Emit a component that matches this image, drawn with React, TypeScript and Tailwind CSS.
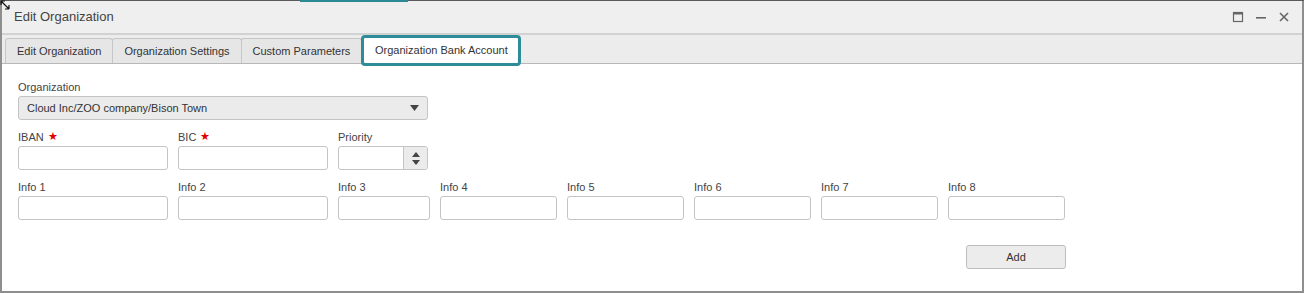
import React from "react";

const font = { fontFamily: '"Liberation Sans", Arial, sans-serif' };

function Field({ label, w, req }: { label: string; w: string; req?: boolean }) {
  return (
    <div className="flex flex-col">
      <div className="h-[16px] text-[11px] leading-[14px] text-[#444] flex items-start">
        {label}
        {req && <span className="text-[#e00000] ml-[4px] text-[11px] leading-[12px]">★</span>}
      </div>
      <div className={`${w} h-[24px] border border-[#c4c4c4] rounded-[3px] bg-white`} />
    </div>
  );
}

export default function App() {
  return (
    <div className="w-[1304px] h-[293px] bg-white overflow-hidden relative" style={font}>
      <div className="absolute left-0 top-0 w-full h-[1px] bg-[#5a5a5a]" />
      <div className="absolute left-[300px] top-0 w-[108px] h-[2px] bg-[#2b8a96]" />
      <svg className="absolute left-0 top-0" width="11" height="11" viewBox="0 0 11 11">
        <path d="M1 1 L9 9 M1 1 L1 5 M1 1 L5 1 M9 9 L9 5 M9 9 L5 9" stroke="#111" strokeWidth="1.2" fill="none" />
      </svg>
      <div className="w-full h-full border-l-[2px] border-r-[2px] border-b-[2px] border-[#8e8e8e] flex flex-col">
        <div className="h-[34px] mt-[1px] bg-[#efefef] flex items-center justify-between pl-[12px] pr-[12px] border-b-[2px] border-[#d2d2d2]">
          <div className="text-[13px] text-[#444]">Edit Organization</div>
          <div className="flex items-center gap-[11px] text-[#555]">
            <svg width="12" height="12" viewBox="0 0 12 12">
              <rect x="1.5" y="1.5" width="9" height="9" fill="none" stroke="#666" strokeWidth="1.2" />
              <rect x="1.5" y="1.5" width="9" height="2" fill="#666" />
            </svg>
            <svg width="12" height="12" viewBox="0 0 12 12">
              <rect x="1" y="6" width="10" height="1.6" fill="#666" />
            </svg>
            <svg width="12" height="12" viewBox="0 0 12 12">
              <path d="M2 2 L10 10 M10 2 L2 10" stroke="#666" strokeWidth="1.6" />
            </svg>
          </div>
        </div>
        <div className="h-[29px] bg-[#ececec] flex items-end pl-[3px] border-b border-[#b8b8b8]">
          {["Edit Organization", "Organization Settings", "Custom Parameters"].map((t) => (
            <div
              key={t}
              className="h-[25px] px-[11px] flex items-center text-[11px] text-[#333] bg-[#e6e6e6] border border-b-0 border-[#c6c6c6] rounded-t-[3px] -mr-[1px]"
            >
              {t}
            </div>
          ))}
          <div className="relative h-[25px] w-[160px]">
            <div className="absolute left-0 -top-[3px] w-[160px] h-[31px] bg-white border-[3px] border-[#2e8c99] rounded-[4px] flex items-center justify-center text-[11px] text-[#333] z-10">
              Organization Bank Account
            </div>
          </div>
        </div>
        <div className="flex-1 bg-white pl-[16px] pt-[16px] flex flex-col">
          <div className="text-[11px] leading-[14px] text-[#444] h-[16px]">Organization</div>
          <div className="w-[410px] h-[24px] bg-[#ebebeb] border border-[#c4c4c4] rounded-[3px] flex items-center justify-between pl-[8px] pr-[8px] text-[11px] text-[#333]">
            <span>Cloud Inc/ZOO company/Bison Town</span>
            <svg width="9" height="6" viewBox="0 0 9 6"><path d="M0 0 L4.5 6 L9 0 Z" fill="#444" /></svg>
          </div>
          <div className="flex gap-[10px] mt-[10px]">
            <Field label="IBAN" w="w-[150px]" req />
            <Field label="BIC" w="w-[150px]" req />
            <div className="flex flex-col">
              <div className="h-[16px] text-[11px] leading-[14px] text-[#444]">Priority</div>
              <div className="w-[90px] h-[24px] border border-[#c4c4c4] rounded-[3px] bg-white flex justify-end">
                <div className="w-[24px] h-full bg-[#ebebeb] border-l border-[#c4c4c4] rounded-r-[3px] flex flex-col items-center justify-center gap-[3px]">
                  <svg width="8" height="5" viewBox="0 0 8 5"><path d="M0 5 L4 0 L8 5 Z" fill="#444" /></svg>
                  <svg width="8" height="5" viewBox="0 0 8 5"><path d="M0 0 L4 5 L8 0 Z" fill="#444" /></svg>
                </div>
              </div>
            </div>
          </div>
          <div className="flex gap-[10px] mt-[10px]">
            <Field label="Info 1" w="w-[150px]" />
            <Field label="Info 2" w="w-[150px]" />
            <Field label="Info 3" w="w-[92px]" />
            <Field label="Info 4" w="w-[117px]" />
            <Field label="Info 5" w="w-[117px]" />
            <Field label="Info 6" w="w-[117px]" />
            <Field label="Info 7" w="w-[117px]" />
            <Field label="Info 8" w="w-[117px]" />
          </div>
          <div className="mt-[25px] ml-[948px] w-[100px] h-[24px] bg-[#ececec] border border-[#bdbdbd] rounded-[3px] flex items-center justify-center text-[11px] text-[#333]">
            Add
          </div>
        </div>
      </div>
    </div>
  );
}
